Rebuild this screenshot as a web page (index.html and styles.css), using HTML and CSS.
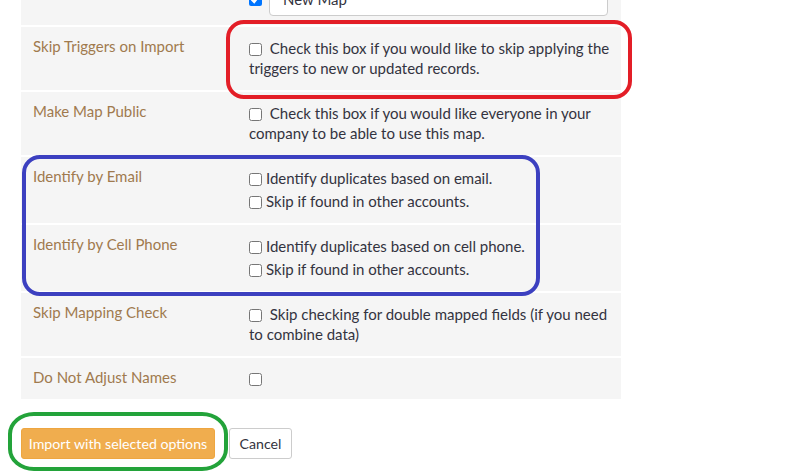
FILE: index.html
```html
<!DOCTYPE html>
<html lang="en">
<head>
<meta charset="utf-8">
<title>Import Options</title>
<link rel="stylesheet" href="styles.css">
</head>
<body>
<div class="page">
  <div class="options">
    <div class="row row-name">
      <div class="label"></div>
      <div class="value value-name">
        <input type="checkbox" class="cb" checked>
        <input type="text" class="name-input" value="New Map">
      </div>
    </div>
    <div class="row">
      <div class="label">Skip Triggers on Import</div>
      <div class="value"><input type="checkbox" class="cb"> Check this box if you would like to skip applying the triggers to new or updated records.</div>
    </div>
    <div class="row">
      <div class="label">Make Map Public</div>
      <div class="value"><input type="checkbox" class="cb"> Check this box if you would like everyone in your company to be able to use this map.</div>
    </div>
    <div class="row">
      <div class="label">Identify by Email</div>
      <div class="value value-list">
        <label class="opt"><input type="checkbox" class="cb">Identify duplicates based on email.</label>
        <label class="opt"><input type="checkbox" class="cb">Skip if found in other accounts.</label>
      </div>
    </div>
    <div class="row">
      <div class="label">Identify by Cell Phone</div>
      <div class="value value-list">
        <label class="opt"><input type="checkbox" class="cb">Identify duplicates based on cell phone.</label>
        <label class="opt"><input type="checkbox" class="cb">Skip if found in other accounts.</label>
      </div>
    </div>
    <div class="row">
      <div class="label">Skip Mapping Check</div>
      <div class="value"><input type="checkbox" class="cb"> Skip checking for double mapped fields (if you need to combine data)</div>
    </div>
    <div class="row">
      <div class="label">Do Not Adjust Names</div>
      <div class="value value-single"><input type="checkbox" class="cb"></div>
    </div>
  </div>
  <div class="actions">
    <button class="btn btn-import">Import with selected options</button>
    <button class="btn btn-cancel">Cancel</button>
  </div>
</div>
<div class="mark mark-red"></div>
<div class="mark mark-blue"></div>
<div class="mark mark-green"></div>
</body>
</html>
```

FILE: styles.css
```css
html, body {
  margin: 0;
  padding: 0;
  background: #ffffff;
}
body {
  font-family: Lato, "Open Sans", sans-serif;
  font-size: 15px;
  color: #333340;
  width: 800px;
  height: 475px;
  overflow: hidden;
  position: relative;
}
.page {
  padding-left: 21px;
  margin-top: -28px;
}
.options {
  width: 600px;
  display: flex;
  flex-direction: column;
  gap: 2px;
}
.row {
  display: grid;
  grid-template-columns: 228px 1fr;
  background: #f5f5f5;
}
.label {
  padding: 9px 12px 0 12px;
  line-height: 20px;
  color: #a07a4e;
}
.value {
  padding: 11px 8px 12px 0;
  line-height: 20px;
}
.value-name {
  padding: 10px 13px 9px 0;
  display: flex;
  align-items: center;
  gap: 7px;
}
.value-list {
  padding: 10px 8px 10px 0;
}
.value-single {
  line-height: 18px;
}
.opt {
  display: block;
  line-height: 23px;
}
.cb {
  width: 13px;
  height: 13px;
  margin: 0 4px 0 0;
  vertical-align: -2px;
}
.value-name .cb {
  margin: 0;
}
.name-input {
  flex: 1;
  height: 34px;
  box-sizing: border-box;
  border: 1px solid #cccccc;
  border-radius: 4px;
  padding: 0 13px;
  font-family: inherit;
  font-size: 15px;
  color: #333340;
  background: #ffffff;
}
.actions {
  margin-top: 29px;
  display: flex;
  gap: 14px;
}
.btn {
  height: 31px;
  font-family: inherit;
  font-size: 14.2px;
  border-radius: 3px;
  padding: 0;
  white-space: nowrap;
  text-align: center;
  cursor: pointer;
}
.btn-import {
  width: 194px;
  background: #f0ad4e;
  border: 1px solid #eea640;
  color: #ffffff;
}
.btn-cancel {
  width: 63px;
  background: #ffffff;
  border: 1px solid #cccccc;
  color: #333340;
}
.mark {
  position: absolute;
  box-sizing: border-box;
  border-width: 4px;
  border-style: solid;
  pointer-events: none;
}
.mark-red {
  left: 226px;
  top: 20px;
  width: 406px;
  height: 79px;
  border-color: #e31e27;
  border-radius: 18px;
}
.mark-blue {
  left: 22px;
  top: 155px;
  width: 518px;
  height: 141px;
  border-color: #3c40c0;
  border-radius: 18px;
}
.mark-green {
  left: 8px;
  top: 412px;
  width: 220px;
  height: 59px;
  border-color: #23a33a;
  border-radius: 26px / 22px;
}
```
